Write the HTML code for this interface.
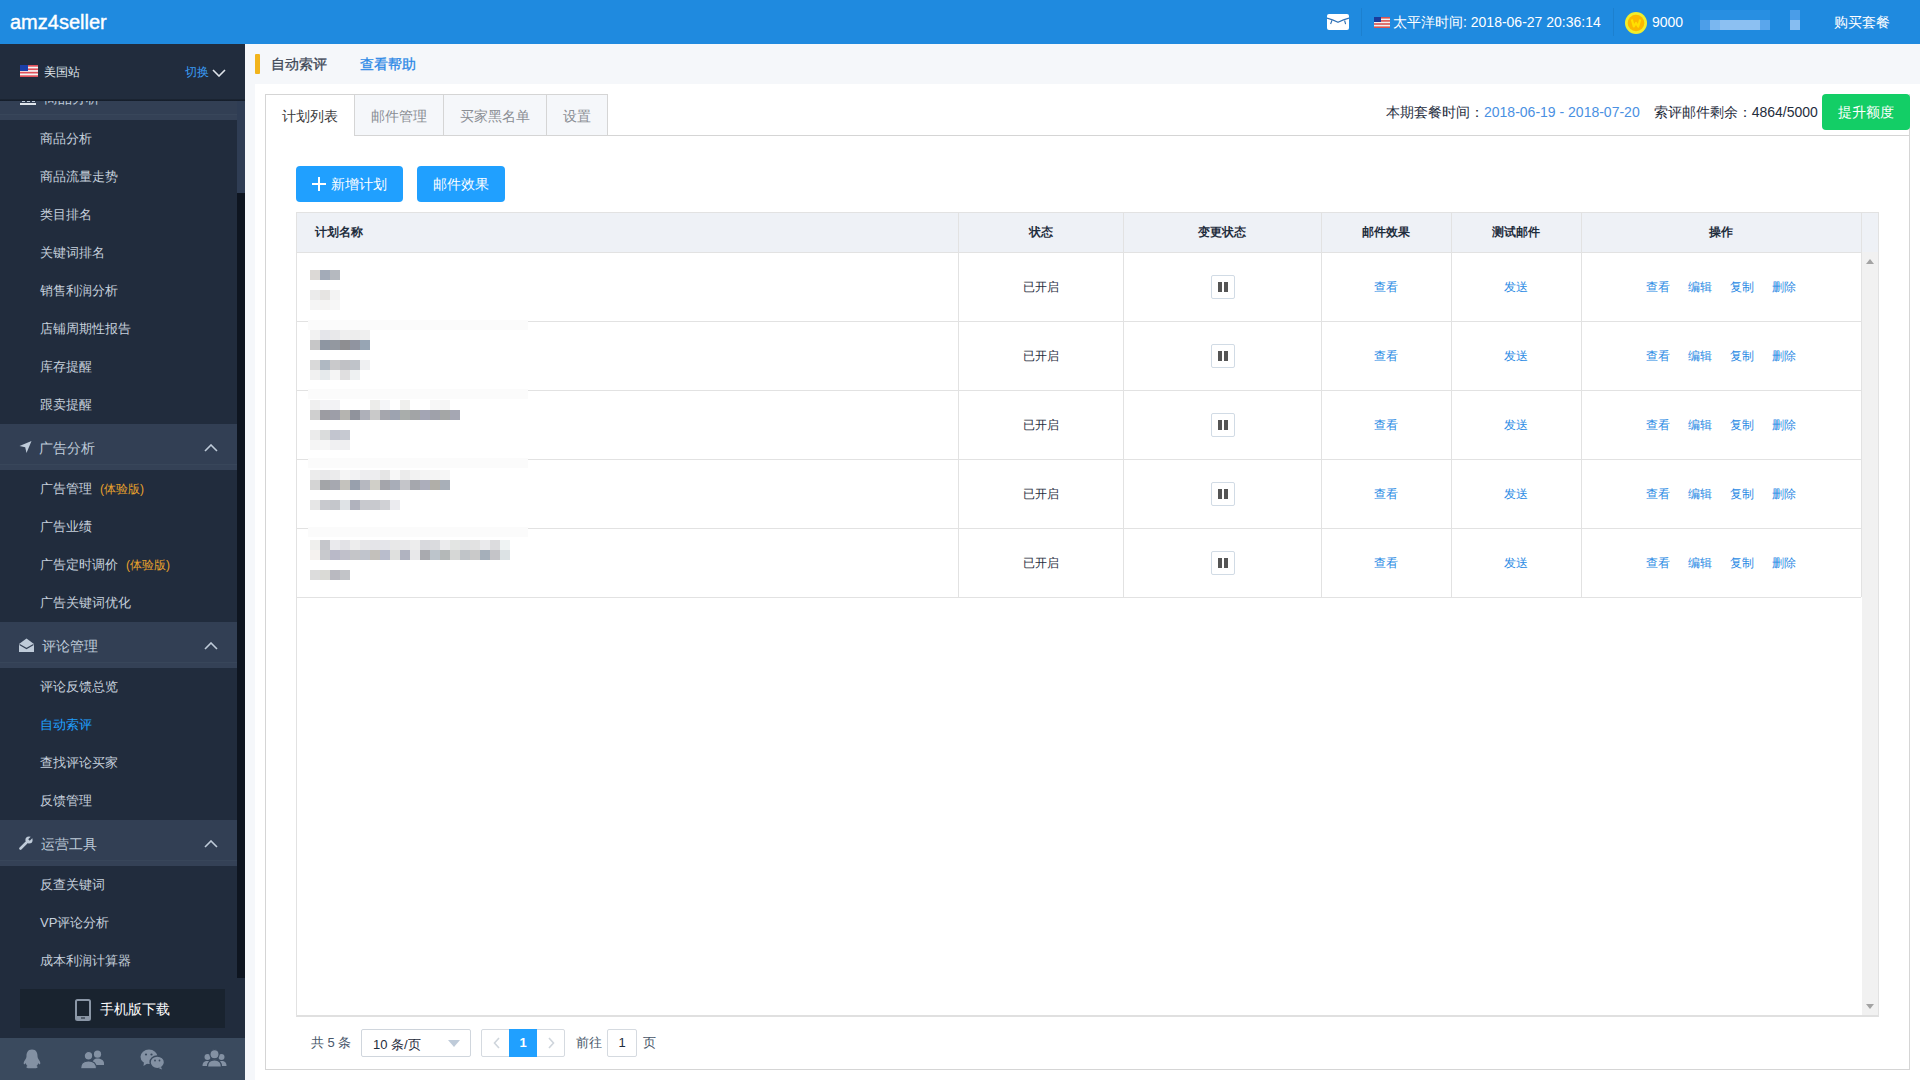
<!DOCTYPE html>
<html><head><meta charset="utf-8">
<style>
*{box-sizing:border-box;margin:0;padding:0}
html,body{width:1920px;height:1080px;overflow:hidden;background:#f5f7fa;font-family:"Liberation Sans",sans-serif;}
.a{position:absolute;white-space:nowrap}
#hd{position:absolute;left:0;top:0;width:1920px;height:44px;background:#1f8adf;color:#fff}
#sb{position:absolute;left:0;top:44px;width:245px;height:1036px;background:#212c3d}
.mi{position:absolute;left:40px;font-size:13px;color:#c6d0dc;line-height:38px;height:38px}
.mh{position:absolute;left:0;width:237px;height:46px;background:#323f54;box-shadow:inset 0 -5px 0 #344156, inset 0 -6px 0 #38465a}
.mh .t{position:absolute;left:40px;top:1px;line-height:46px;font-size:14px;color:#bfcbd9}
.mh .ar{position:absolute;left:204px;top:18px;width:10px;height:10px}
.tag{color:#e8a22c;font-size:12px;margin-left:8px}
.blk{position:absolute;height:10px}
.blk i{display:inline-block;width:10px;height:10px;vertical-align:top}
.th{position:absolute;top:212px;height:40px;line-height:40px;font-size:12px;font-weight:bold;color:#1f2d3d;text-align:center}
.cell{position:absolute;font-size:12px;line-height:20px;text-align:center;color:#1f2d3d}
.lk{color:#2a8ae4}
</style></head><body>

<!-- HEADER -->
<div id="hd">
  <div class="a" style="left:10px;top:10px;font-size:20px;line-height:24px;color:#fff;-webkit-text-stroke:0.4px #fff">amz4seller</div>
  <!-- mail -->
  <svg class="a" style="left:1327px;top:14px" width="22" height="16" viewBox="0 0 22 16"><rect x="0" y="0" width="22" height="16" rx="2" fill="#fff"/><path d="M0 4.1 Q5.5 5.5 11 8.3 Q16.5 5.5 22 4.1" stroke="#2d6fb5" stroke-width="1.2" fill="none"/><path d="M5 6.3 L3.6 10 M17.6 6.5 L18.6 10.2" stroke="#2d6fb5" stroke-width="1.1" fill="none"/></svg>
  <div class="a" style="left:1361px;top:8px;width:1px;height:28px;background:rgba(0,0,0,0.07)"></div>
  <svg class="a" style="left:1374px;top:17px" width="16" height="11" viewBox="0 0 16 11"><rect width="16" height="11" fill="#f2f2f2"/><rect y="0" width="16" height="1.6" fill="#d9534f"/><rect y="3.1" width="16" height="1.6" fill="#d9534f"/><rect y="6.2" width="16" height="1.6" fill="#d9534f"/><rect y="9.4" width="16" height="1.6" fill="#d9534f"/><rect width="7" height="5" fill="#1b3a9a"/></svg>
  <div class="a" style="left:1393px;top:12px;font-size:14px;line-height:20px;color:#fff">太平洋时间: 2018-06-27 20:36:14</div>
  <div class="a" style="left:1613px;top:8px;width:1px;height:28px;background:rgba(0,0,0,0.07)"></div>
  <svg class="a" style="left:1625px;top:12px" width="22" height="22" viewBox="0 0 22 22"><circle cx="11" cy="11" r="11" fill="#f2ee2a"/><circle cx="11" cy="11" r="8.3" fill="#fbb800"/><path d="M6.8 7.5 L8.8 14.5 L11 11 L13.2 14.5 L15.2 7.5" stroke="#ffe000" stroke-width="2.2" fill="none" stroke-linejoin="round"/></svg>
  <div class="a" style="left:1652px;top:12px;font-size:14px;line-height:20px;color:#fff">9000</div>
  <div class="a" style="left:1700px;top:10px;width:70px;height:10px;background:#288fe2"></div>
  <div class="a" style="left:1700px;top:20px;width:10px;height:10px;background:#4c9ee9"></div>
  <div class="a" style="left:1710px;top:20px;width:10px;height:10px;background:#7ab7f0"></div>
  <div class="a" style="left:1720px;top:20px;width:40px;height:10px;background:#8cc0f2"></div>
  <div class="a" style="left:1760px;top:20px;width:10px;height:10px;background:#5aa6ec"></div>
  <div class="a" style="left:1790px;top:10px;width:10px;height:10px;background:#4a9de8"></div>
  <div class="a" style="left:1790px;top:20px;width:10px;height:10px;background:#86bdf1"></div>
  <div class="a" style="left:1834px;top:12px;font-size:14px;line-height:20px;color:#fff">购买套餐</div>
</div>

<!-- SIDEBAR -->
<div id="sb">
  <svg class="a" style="left:20px;top:21px" width="18" height="12" viewBox="0 0 18 12"><rect width="18" height="12" fill="#f4f4f4"/><rect y="0" width="18" height="1.7" fill="#e0505a"/><rect y="3.4" width="18" height="1.7" fill="#e0505a"/><rect y="6.8" width="18" height="1.7" fill="#e0505a"/><rect y="10.3" width="18" height="1.7" fill="#e0505a"/><rect width="8" height="6" fill="#1b3fa8"/></svg>
  <div class="a" style="left:44px;top:18px;font-size:12px;line-height:20px;color:#dfe4ea">美国站</div>
  <div class="a" style="left:185px;top:18px;font-size:12px;line-height:20px;color:#3a9cf6">切换</div>
  <svg class="a" style="left:212px;top:25px" width="14" height="8" viewBox="0 0 14 8"><path d="M1 1 L7 7 L13 1" stroke="#dfe4ea" stroke-width="1.6" fill="none"/></svg>
  <div class="a" style="left:0;top:57px;width:237px;height:879px;overflow:hidden">
<div class="mh" style="top:-27px"><div class="t" style="left:44px">商品分析</div><svg class="a" style="left:20px;top:15px" width="16" height="16" viewBox="0 0 16 16"><rect x="0" y="14" width="16" height="2" fill="#dfe4ea"/><rect x="2" y="6" width="3" height="7" fill="#bfcbd9"/><rect x="7" y="3" width="3" height="10" fill="#bfcbd9"/><rect x="12" y="8" width="3" height="5" fill="#bfcbd9"/></svg></div>
<div class="mi" style="top:19px">商品分析</div>
<div class="mi" style="top:57px">商品流量走势</div>
<div class="mi" style="top:95px">类目排名</div>
<div class="mi" style="top:133px">关键词排名</div>
<div class="mi" style="top:171px">销售利润分析</div>
<div class="mi" style="top:209px">店铺周期性报告</div>
<div class="mi" style="top:247px">库存提醒</div>
<div class="mi" style="top:285px">跟卖提醒</div>
<div class="mh" style="top:323px"><div class="t" style="left:39px">广告分析</div><svg class="a" style="left:19px;top:17px" width="13" height="12" viewBox="0 0 13 12"><path d="M0.5 5 L12.5 0 L7.5 12 L6.2 6.2 Z" fill="#bfcbd9"/></svg><svg class="ar" viewBox="0 0 14 8" width="14" height="8" style="left:204px;top:19.5px;width:14px;height:8px"><path d="M1 7 L7 1 L13 7" stroke="#bfcbd9" stroke-width="1.6" fill="none"/></svg></div>
<div class="mi" style="top:369px">广告管理<span class="tag">(体验版)</span></div>
<div class="mi" style="top:407px">广告业绩</div>
<div class="mi" style="top:445px">广告定时调价<span class="tag">(体验版)</span></div>
<div class="mi" style="top:483px">广告关键词优化</div>
<div class="mh" style="top:521px"><div class="t" style="left:42px">评论管理</div><svg class="a" style="left:19px;top:16px" width="15" height="14" viewBox="0 0 15 14"><path d="M0 6 L7.5 0.5 L15 6 L15 14 L0 14 Z" fill="#bfcbd9"/><path d="M0.5 6.5 L7.5 10.5 L14.5 6.5" stroke="#323f54" stroke-width="1.2" fill="none"/></svg><svg class="ar" viewBox="0 0 14 8" width="14" height="8" style="left:204px;top:19.5px;width:14px;height:8px"><path d="M1 7 L7 1 L13 7" stroke="#bfcbd9" stroke-width="1.6" fill="none"/></svg></div>
<div class="mi" style="top:567px">评论反馈总览</div>
<div class="mi" style="top:605px"><span style="color:#20a0ff">自动索评</span></div>
<div class="mi" style="top:643px">查找评论买家</div>
<div class="mi" style="top:681px">反馈管理</div>
<div class="mh" style="top:719px"><div class="t" style="left:41px">运营工具</div><svg class="a" style="left:19px;top:16px" width="14" height="14" viewBox="0 0 14 14"><path d="M1.5 12.5 L7 7" stroke="#bfcbd9" stroke-width="2.6" stroke-linecap="round"/><circle cx="10" cy="4" r="3.6" fill="#bfcbd9"/><path d="M10 4 L13.5 0.5" stroke="#323f54" stroke-width="2.2"/></svg><svg class="ar" viewBox="0 0 14 8" width="14" height="8" style="left:204px;top:19.5px;width:14px;height:8px"><path d="M1 7 L7 1 L13 7" stroke="#bfcbd9" stroke-width="1.6" fill="none"/></svg></div>
<div class="mi" style="top:765px">反查关键词</div>
<div class="mi" style="top:803px">VP评论分析</div>
<div class="mi" style="top:841px">成本利润计算器</div>
  </div>
  <div class="a" style="left:0;top:55px;width:245px;height:2px;background:linear-gradient(#1c2634,#131c29)"></div>
  <div class="a" style="left:237px;top:57px;width:8px;height:92px;background:#2f3d54"></div>
  <div class="a" style="left:237px;top:149px;width:8px;height:785px;background:#0e1520"></div>
  <div class="a" style="left:20px;top:945px;width:205px;height:39px;background:#19232f"></div>
  <svg class="a" style="left:75px;top:955px" width="16" height="22" viewBox="0 0 16 22"><rect x="1" y="1" width="14" height="20" rx="1.5" fill="none" stroke="#8a96a6" stroke-width="2"/><rect x="1" y="17" width="14" height="4" fill="#8a96a6"/><rect x="5" y="2.2" width="6" height="1" fill="#19232f"/><rect x="6" y="18.5" width="4" height="1" fill="#19232f"/></svg>
  <div class="a" style="left:100px;top:955px;font-size:14px;line-height:20px;color:#fff">手机版下载</div>
  <div class="a" style="left:0;top:994px;width:245px;height:42px;background:#3a4a5e">
  <svg class="a" style="left:22px;top:11px" width="20" height="20" viewBox="0 0 20 20"><path d="M10 0.5 C5.5 0.5 4.5 4 4.5 7 C4.5 8.5 4 9.5 3 11 C1.5 13 1.3 15 2.2 15.3 C2.8 15.5 3.5 14.5 3.8 14 C4 15.5 4.8 16.5 5.5 17 C4 17.6 3.8 19 6 19.2 L14 19.2 C16.2 19 16 17.6 14.5 17 C15.2 16.5 16 15.5 16.2 14 C16.5 14.5 17.2 15.5 17.8 15.3 C18.7 15 18.5 13 17 11 C16 9.5 15.5 8.5 15.5 7 C15.5 4 14.5 0.5 10 0.5Z" fill="#8391a3"/></svg>
  <svg class="a" style="left:80px;top:12px" width="25" height="19" viewBox="0 0 25 19"><circle cx="17.5" cy="4.2" r="3.6" fill="#8391a3"/><path d="M12.5 14.5 C12.5 10 14.5 8.6 17.5 8.6 C20.5 8.6 24 10 24 13.5 L24 15 L14 15 Z" fill="#8391a3"/><circle cx="8.5" cy="5.8" r="4.3" fill="#8391a3" stroke="#3a4a5e" stroke-width="1.2"/><path d="M0.5 18.8 C0.5 13.5 3 11 8.5 11 C14 11 16.5 13.5 16.5 18.8 Z" fill="#8391a3" stroke="#3a4a5e" stroke-width="1.2"/></svg>
  <svg class="a" style="left:140px;top:11px" width="25" height="21" viewBox="0 0 25 21"><ellipse cx="9" cy="7.8" rx="8.5" ry="7.3" fill="#8391a3"/><path d="M4 13 L3.5 17 L8 14Z" fill="#8391a3"/><circle cx="6" cy="5.5" r="1.1" fill="#3a4a5e"/><circle cx="11.5" cy="5.5" r="1.1" fill="#3a4a5e"/><ellipse cx="17.3" cy="13.3" rx="7.2" ry="6.3" fill="#8391a3" stroke="#3a4a5e" stroke-width="1.4"/><path d="M21 18 L22 20.5 L18.5 19Z" fill="#8391a3"/><circle cx="15" cy="11.5" r="0.9" fill="#3a4a5e"/><circle cx="19.5" cy="11.5" r="0.9" fill="#3a4a5e"/></svg>
  <svg class="a" style="left:202px;top:11px" width="25" height="19" viewBox="0 0 25 19"><circle cx="5.5" cy="8" r="3" fill="#8391a3"/><path d="M0.5 17 C0.5 13.5 2 12 5.5 12 C9 12 10 13.5 10 17Z" fill="#8391a3"/><circle cx="19.5" cy="8" r="3" fill="#8391a3"/><path d="M15 17 C15 13.5 16 12 19.5 12 C23 12 24.5 13.5 24.5 17Z" fill="#8391a3"/><circle cx="12.5" cy="5.2" r="4.6" fill="#8391a3" stroke="#3a4a5e" stroke-width="1.2"/><path d="M5.5 18 C5.5 13 8 10.8 12.5 10.8 C17 10.8 19.5 13 19.5 18Z" fill="#8391a3" stroke="#3a4a5e" stroke-width="1.2"/></svg>
</div>
</div>

<!-- CONTENT -->
<div id="ct">
  <div class="a" style="left:255px;top:54px;width:5px;height:20px;background:#f2b41c;border-radius:1px"></div>
  <div class="a" style="left:271px;top:54px;font-size:14px;line-height:20px;color:#3d4656;-webkit-text-stroke:0.3px #3d4656">自动索评</div>
  <div class="a" style="left:360px;top:54px;font-size:14px;line-height:20px;color:#2b88e6;-webkit-text-stroke:0.3px #2b88e6">查看帮助</div>
  <div class="a" style="left:255px;top:84px;width:1665px;height:996px;background:#fff"></div>
  <!-- tabs -->
  <div class="a" style="left:265px;top:94px;width:1645px;height:976px;border:1px solid #d5d5d5;border-top:none"></div>
  <div class="a" style="left:354px;top:135px;width:1556px;height:1px;background:#d5d5d5"></div>
  <div class="a" style="left:265px;top:94px;width:342px;height:1px;background:#d5d5d5"></div>
  <div class="a" style="left:354px;top:95px;width:253px;height:40px;background:#f5f7fa"></div>
  <div class="a" style="left:354px;top:94px;width:1px;height:41px;background:#d5d5d5"></div>
  <div class="a" style="left:443px;top:94px;width:1px;height:41px;background:#d5d5d5"></div>
  <div class="a" style="left:546px;top:94px;width:1px;height:41px;background:#d5d5d5"></div>
  <div class="a" style="left:607px;top:94px;width:1px;height:41px;background:#d5d5d5"></div>
  <div class="a" style="left:282px;top:106px;font-size:14px;line-height:20px;color:#3a3a3a">计划列表</div>
  <div class="a" style="left:371px;top:106px;font-size:14px;line-height:20px;color:#8a8e94">邮件管理</div>
  <div class="a" style="left:460px;top:106px;font-size:14px;line-height:20px;color:#8a8e94">买家黑名单</div>
  <div class="a" style="left:563px;top:106px;font-size:14px;line-height:20px;color:#8a8e94">设置</div>
  <div class="a" style="left:1386px;top:102px;font-size:14px;line-height:20px;color:#1f2d3d">本期套餐时间：<span style="color:#4a90e2">2018-06-19 - 2018-07-20</span><span style="display:inline-block;width:14px"></span>索评邮件剩余：4864/5000</div>
  <div class="a" style="left:1822px;top:94px;width:88px;height:36px;background:#13ce66;border-radius:4px;color:#fff;font-size:14px;line-height:36px;text-align:center">提升额度</div>
  <!-- buttons -->
  <div class="a" style="left:296px;top:166px;width:107px;height:36px;background:#20a0ff;border-radius:4px;color:#fff;font-size:14px;line-height:36px"><svg class="a" style="left:16px;top:11px" width="14" height="14" viewBox="0 0 14 14"><path d="M7 0 V14 M0 7 H14" stroke="#fff" stroke-width="2"/></svg><span class="a" style="left:35px;top:0">新增计划</span></div>
  <div class="a" style="left:417px;top:166px;width:88px;height:36px;background:#20a0ff;border-radius:4px;color:#fff;font-size:14px;line-height:36px;text-align:center">邮件效果</div>
  <!-- table -->
  <div class="a" style="left:296px;top:212px;width:1583px;height:805px;border:1px solid #e2e2e2;border-bottom:2px solid #e0e0e0"></div>
  <div class="a" style="left:297px;top:213px;width:1581px;height:39px;background:#eef1f6"></div>
  <div class="a" style="left:297px;top:252px;width:1565px;height:1px;background:#e2e2e2"></div>
  <div class="a" style="left:1862px;top:252px;width:16px;height:763px;background:#f1f1f1"></div>
  <svg class="a" style="left:1866px;top:259px" width="8" height="5" viewBox="0 0 8 5"><path d="M0 5 L4 0 L8 5Z" fill="#a3a3a3"/></svg>
  <svg class="a" style="left:1866px;top:1004px" width="8" height="5" viewBox="0 0 8 5"><path d="M0 0 L4 5 L8 0Z" fill="#a3a3a3"/></svg>
  <div class="th" style="left:315px;width:200px;text-align:left">计划名称</div><div class="th" style="left:958px;width:165px">状态</div><div class="th" style="left:1123px;width:198px">变更状态</div><div class="th" style="left:1321px;width:130px">邮件效果</div><div class="th" style="left:1451px;width:130px">测试邮件</div><div class="th" style="left:1581px;width:280px">操作</div>
  <div class="a" style="left:958px;top:212px;width:1px;height:385px;background:#e2e2e2"></div><div class="a" style="left:1123px;top:212px;width:1px;height:385px;background:#e2e2e2"></div><div class="a" style="left:1321px;top:212px;width:1px;height:385px;background:#e2e2e2"></div><div class="a" style="left:1451px;top:212px;width:1px;height:385px;background:#e2e2e2"></div><div class="a" style="left:1581px;top:212px;width:1px;height:385px;background:#e2e2e2"></div><div class="a" style="left:1861px;top:212px;width:1px;height:385px;background:#e2e2e2"></div>
  <div class="a" style="left:296px;top:321px;width:1565px;height:1px;background:#e2e2e2"></div><div class="cell" style="left:958px;top:277px;width:165px">已开启</div><div class="a" style="left:1211px;top:275px;width:24px;height:24px;border:1px solid #d1dbe5;border-radius:2px;background:#fff"><div class="a" style="left:6px;top:6px;width:4px;height:10px;background:#555"></div><div class="a" style="left:12px;top:6px;width:4px;height:10px;background:#555"></div></div><div class="cell lk" style="left:1321px;top:277px;width:130px">查看</div><div class="cell lk" style="left:1451px;top:277px;width:130px">发送</div><div class="cell lk" style="left:1646px;top:277px;width:24px">查看</div><div class="cell lk" style="left:1688px;top:277px;width:24px">编辑</div><div class="cell lk" style="left:1730px;top:277px;width:24px">复制</div><div class="cell lk" style="left:1772px;top:277px;width:24px">删除</div><div class="a" style="left:296px;top:390px;width:1565px;height:1px;background:#e2e2e2"></div><div class="cell" style="left:958px;top:346px;width:165px">已开启</div><div class="a" style="left:1211px;top:344px;width:24px;height:24px;border:1px solid #d1dbe5;border-radius:2px;background:#fff"><div class="a" style="left:6px;top:6px;width:4px;height:10px;background:#555"></div><div class="a" style="left:12px;top:6px;width:4px;height:10px;background:#555"></div></div><div class="cell lk" style="left:1321px;top:346px;width:130px">查看</div><div class="cell lk" style="left:1451px;top:346px;width:130px">发送</div><div class="cell lk" style="left:1646px;top:346px;width:24px">查看</div><div class="cell lk" style="left:1688px;top:346px;width:24px">编辑</div><div class="cell lk" style="left:1730px;top:346px;width:24px">复制</div><div class="cell lk" style="left:1772px;top:346px;width:24px">删除</div><div class="a" style="left:296px;top:459px;width:1565px;height:1px;background:#e2e2e2"></div><div class="cell" style="left:958px;top:415px;width:165px">已开启</div><div class="a" style="left:1211px;top:413px;width:24px;height:24px;border:1px solid #d1dbe5;border-radius:2px;background:#fff"><div class="a" style="left:6px;top:6px;width:4px;height:10px;background:#555"></div><div class="a" style="left:12px;top:6px;width:4px;height:10px;background:#555"></div></div><div class="cell lk" style="left:1321px;top:415px;width:130px">查看</div><div class="cell lk" style="left:1451px;top:415px;width:130px">发送</div><div class="cell lk" style="left:1646px;top:415px;width:24px">查看</div><div class="cell lk" style="left:1688px;top:415px;width:24px">编辑</div><div class="cell lk" style="left:1730px;top:415px;width:24px">复制</div><div class="cell lk" style="left:1772px;top:415px;width:24px">删除</div><div class="a" style="left:296px;top:528px;width:1565px;height:1px;background:#e2e2e2"></div><div class="cell" style="left:958px;top:484px;width:165px">已开启</div><div class="a" style="left:1211px;top:482px;width:24px;height:24px;border:1px solid #d1dbe5;border-radius:2px;background:#fff"><div class="a" style="left:6px;top:6px;width:4px;height:10px;background:#555"></div><div class="a" style="left:12px;top:6px;width:4px;height:10px;background:#555"></div></div><div class="cell lk" style="left:1321px;top:484px;width:130px">查看</div><div class="cell lk" style="left:1451px;top:484px;width:130px">发送</div><div class="cell lk" style="left:1646px;top:484px;width:24px">查看</div><div class="cell lk" style="left:1688px;top:484px;width:24px">编辑</div><div class="cell lk" style="left:1730px;top:484px;width:24px">复制</div><div class="cell lk" style="left:1772px;top:484px;width:24px">删除</div><div class="a" style="left:296px;top:597px;width:1565px;height:1px;background:#e2e2e2"></div><div class="cell" style="left:958px;top:553px;width:165px">已开启</div><div class="a" style="left:1211px;top:551px;width:24px;height:24px;border:1px solid #d1dbe5;border-radius:2px;background:#fff"><div class="a" style="left:6px;top:6px;width:4px;height:10px;background:#555"></div><div class="a" style="left:12px;top:6px;width:4px;height:10px;background:#555"></div></div><div class="cell lk" style="left:1321px;top:553px;width:130px">查看</div><div class="cell lk" style="left:1451px;top:553px;width:130px">发送</div><div class="cell lk" style="left:1646px;top:553px;width:24px">查看</div><div class="cell lk" style="left:1688px;top:553px;width:24px">编辑</div><div class="cell lk" style="left:1730px;top:553px;width:24px">复制</div><div class="cell lk" style="left:1772px;top:553px;width:24px">删除</div>
  <div class="blk" style="left:310px;top:270px"><i style="background:#dcd9d6"></i><i style="background:#a3abb8"></i><i style="background:#b5b9bf"></i></div><div class="blk" style="left:310px;top:290px"><i style="background:#ebebeb"></i><i style="background:#e6e4e2"></i><i style="background:#f3f3f3"></i></div><div class="blk" style="left:310px;top:300px"><i style="background:#f5f5f5"></i><i style="background:#f5f4f3"></i><i style="background:#f7f7f7"></i></div><div class="blk" style="left:310px;top:330px"><i style="background:#f2f2f2"></i><i style="background:#e4e5ea"></i><i style="background:#e8e8ea"></i><i style="background:#efefef"></i><i style="background:#ededed"></i><i style="background:#efefef"></i></div><div class="blk" style="left:310px;top:340px"><i style="background:#c6c6c7"></i><i style="background:#8e96a2"></i><i style="background:#9398a0"></i><i style="background:#8e8e91"></i><i style="background:#9094a0"></i><i style="background:#97a5b4"></i></div><div class="blk" style="left:310px;top:360px"><i style="background:#d9d9d9"></i><i style="background:#afb8c2"></i><i style="background:#c9c9cb"></i><i style="background:#c0c1c5"></i><i style="background:#bfc3c9"></i><i style="background:#eff0f2"></i></div><div class="blk" style="left:310px;top:370px"><i style="background:#f1f1f1"></i><i style="background:#e6eaec"></i><i style="background:#f5f5f5"></i><i style="background:#e0dfe0"></i><i style="background:#eef1f2"></i></div><div class="blk" style="left:310px;top:400px"><i style="background:#efefef"></i><i style="background:#f3f3f6"></i><i style="background:#f2f2f4"></i><i style="background:#fff"></i><i style="background:#fff"></i><i style="background:#fff"></i><i style="background:#ececea"></i><i style="background:#f4f5f8"></i><i style="background:#fff"></i><i style="background:#efefed"></i><i style="background:#fff"></i><i style="background:#fff"></i><i style="background:#f7f7f7"></i><i style="background:#f5f5f5"></i><i style="background:#fff"></i></div><div class="blk" style="left:310px;top:410px"><i style="background:#cfcfcf"></i><i style="background:#9c9ca2"></i><i style="background:#9d9ea8"></i><i style="background:#b5b4b0"></i><i style="background:#90939c"></i><i style="background:#aeb0b9"></i><i style="background:#c9c9c9"></i><i style="background:#a5a6ad"></i><i style="background:#9da3b0"></i><i style="background:#a9adab"></i><i style="background:#a2a4a6"></i><i style="background:#a3a5b4"></i><i style="background:#9fa1aa"></i><i style="background:#a4a6a6"></i><i style="background:#a5a7b3"></i></div><div class="blk" style="left:310px;top:430px"><i style="background:#ebebeb"></i><i style="background:#dadcdc"></i><i style="background:#c2c5cf"></i><i style="background:#c6c9d1"></i></div><div class="blk" style="left:310px;top:440px"><i style="background:#f5f5f5"></i><i style="background:#f7f7f7"></i><i style="background:#f0f0f2"></i><i style="background:#efeff1"></i></div><div class="blk" style="left:310px;top:470px"><i style="background:#ececec"></i><i style="background:#e8e8ea"></i><i style="background:#ebebec"></i><i style="background:#f5f5f5"></i><i style="background:#f2f2f3"></i><i style="background:#ededef"></i><i style="background:#ededef"></i><i style="background:#e5e5e5"></i><i style="background:#f7f7f7"></i><i style="background:#ebebeb"></i><i style="background:#f2f2f2"></i><i style="background:#f4f4f4"></i><i style="background:#f4f4f4"></i><i style="background:#f6f6f6"></i></div><div class="blk" style="left:310px;top:480px"><i style="background:#d4d4d4"></i><i style="background:#a3a5a8"></i><i style="background:#a6a8b0"></i><i style="background:#c4c2bd"></i><i style="background:#98a0ad"></i><i style="background:#b6b8c0"></i><i style="background:#d0cfc8"></i><i style="background:#a4a5ab"></i><i style="background:#a8adb8"></i><i style="background:#c4c5c9"></i><i style="background:#a5a7ad"></i><i style="background:#acaebb"></i><i style="background:#b0aea8"></i><i style="background:#a8afb8"></i></div><div class="blk" style="left:310px;top:500px"><i style="background:#e6e6e6"></i><i style="background:#c8c9ce"></i><i style="background:#c4c6cb"></i><i style="background:#dfe3e6"></i><i style="background:#b0b2bd"></i><i style="background:#c8c9ce"></i><i style="background:#c8c9ce"></i><i style="background:#d0d1d5"></i><i style="background:#ebebef"></i></div><div class="blk" style="left:310px;top:540px"><i style="background:#efefed"></i><i style="background:#c5c6cb"></i><i style="background:#eaeaed"></i><i style="background:#e2e2e6"></i><i style="background:#ededed"></i><i style="background:#e6e6e8"></i><i style="background:#e4e4e8"></i><i style="background:#e4e5ea"></i><i style="background:#e8e8e8"></i><i style="background:#e8e8ea"></i><i style="background:#ededed"></i><i style="background:#d8d9dd"></i><i style="background:#dadbde"></i><i style="background:#ebebed"></i><i style="background:#e3e5e3"></i><i style="background:#e0e1e3"></i><i style="background:#e2e2e2"></i><i style="background:#eaeaec"></i><i style="background:#dcdcde"></i><i style="background:#eff3f3"></i></div><div class="blk" style="left:310px;top:550px"><i style="background:#f5f2ef"></i><i style="background:#c8c9cd"></i><i style="background:#b9b9c8"></i><i style="background:#c0c0ca"></i><i style="background:#c4c5c8"></i><i style="background:#c0c4cc"></i><i style="background:#c3c0bb"></i><i style="background:#b9bdcc"></i><i style="background:#dfe0de"></i><i style="background:#b0b3c0"></i><i style="background:#e8e8ea"></i><i style="background:#a9aaaf"></i><i style="background:#bcc4cb"></i><i style="background:#b4b8b8"></i><i style="background:#d6d7d6"></i><i style="background:#c0c4c8"></i><i style="background:#c9c9c9"></i><i style="background:#a5afba"></i><i style="background:#c4c4c8"></i><i style="background:#dce2e4"></i></div><div class="blk" style="left:310px;top:570px"><i style="background:#dcdcdc"></i><i style="background:#dadad6"></i><i style="background:#b9b9c0"></i><i style="background:#c2c4c8"></i></div>
  <div class="a" style="left:308px;top:320px;width:220px;height:10px;background:#fbfbfb"></div><div class="a" style="left:308px;top:389px;width:220px;height:10px;background:#fbfbfb"></div><div class="a" style="left:308px;top:458px;width:220px;height:10px;background:#fbfbfb"></div><div class="a" style="left:308px;top:527px;width:220px;height:10px;background:#fbfbfb"></div>
  <!-- pagination -->
  <div class="a" style="left:311px;top:1033px;font-size:13px;line-height:20px;color:#48576a">共 5 条</div>
  <div class="a" style="left:361px;top:1029px;width:110px;height:28px;border:1px solid #d0d6dd;border-radius:2px;background:#fff"></div>
  <div class="a" style="left:373px;top:1035px;font-size:13px;line-height:20px;color:#1f2d3d">10 条/页</div>
  <svg class="a" style="left:448px;top:1040px" width="12" height="7" viewBox="0 0 12 7"><path d="M0 0 L12 0 L6 7Z" fill="#bfcbd9"/></svg>
  <div class="a" style="left:481px;top:1029px;width:84px;height:28px;border:1px solid #d5dae0;border-radius:2px;background:#fff"></div>
  <div class="a" style="left:509px;top:1029px;width:28px;height:28px;background:#20a0ff;color:#fff;font-size:13px;font-weight:bold;line-height:28px;text-align:center">1</div>
  <svg class="a" style="left:493px;top:1037px" width="7" height="12" viewBox="0 0 7 12"><path d="M6 1 L1.5 6 L6 11" stroke="#cfd5dc" stroke-width="1.6" fill="none"/></svg>
  <svg class="a" style="left:548px;top:1037px" width="7" height="12" viewBox="0 0 7 12"><path d="M1 1 L5.5 6 L1 11" stroke="#cfd5dc" stroke-width="1.6" fill="none"/></svg>
  <div class="a" style="left:576px;top:1033px;font-size:13px;line-height:20px;color:#48576a">前往</div>
  <div class="a" style="left:607px;top:1029px;width:30px;height:28px;border:1px solid #d5dae0;border-radius:2px;background:#fff;font-size:13px;line-height:26px;text-align:center;color:#1f2d3d">1</div>
  <div class="a" style="left:643px;top:1033px;font-size:13px;line-height:20px;color:#48576a">页</div>
</div>

</body></html>
